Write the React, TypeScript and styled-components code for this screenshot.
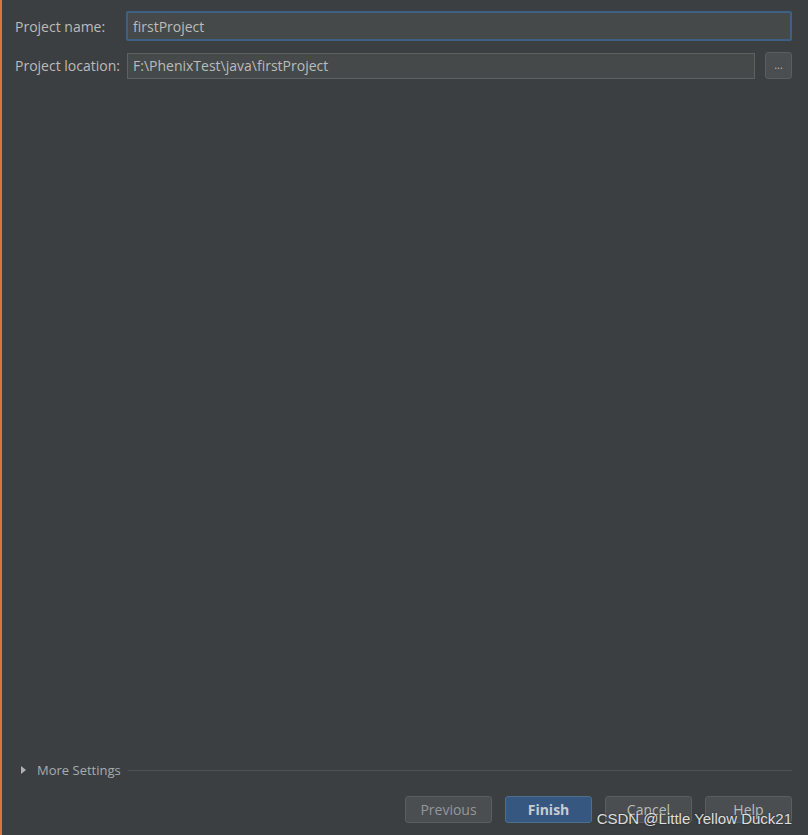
import React from "react";
import styled, { createGlobalStyle } from "styled-components";

const GlobalStyle = createGlobalStyle`
  html, body {
    margin: 0;
    padding: 0;
    background: #3c3f41;
  }
  #root {
    height: 835px;
  }
`;

const Dialog = styled.div`
  position: relative;
  box-sizing: border-box;
  height: 835px;
  display: flex;
  flex-direction: column;
  background: #3c3f41;
  border-left: 2px solid #d9773a;
  padding: 11px 16px 12px 13px;
  font-family: "Open Sans", "Noto Sans", sans-serif;
  font-size: 14px;
  color: #bbbbbb;
`;

const Form = styled.div`
  display: grid;
  grid-template-columns: 112px 1fr auto;
  row-gap: 11px;
  align-items: center;
`;

const Label = styled.label`
  color: #bbbbbb;
  white-space: nowrap;
`;

const Field = styled.div<{ $focused?: boolean; $span?: boolean }>`
  box-sizing: border-box;
  grid-column: ${(p) => (p.$span ? "2 / 4" : "auto")};
  height: ${(p) => (p.$focused ? "30px" : "26px")};
  margin-left: ${(p) => (p.$focused ? "-1px" : "0")};
  display: flex;
  align-items: center;
  padding-left: ${(p) => (p.$focused ? "5px" : "5px")};
  background: #45494a;
  border: ${(p) => (p.$focused ? "2px solid #3d6185" : "1px solid #5e6162")};
  border-radius: ${(p) => (p.$focused ? "2px" : "0")};
  color: #bbbbbb;
`;

const BrowseButton = styled.div`
  box-sizing: border-box;
  width: 27px;
  height: 27px;
  margin-left: 10px;
  display: flex;
  align-items: center;
  justify-content: center;
  background: #4a4e50;
  border: 1px solid #5b5e60;
  border-radius: 3px;
  color: #bbbbbb;
  font-size: 11px;
  padding-bottom: 2px;
`;

const Spacer = styled.div`
  flex: 1;
`;

const MoreRow = styled.div`
  display: flex;
  align-items: center;
  gap: 10px;
  padding-left: 6px;
  margin-bottom: 17px;
`;

const Triangle = styled.span`
  width: 0;
  height: 0;
  border-top: 4px solid transparent;
  border-bottom: 4px solid transparent;
  border-left: 5px solid #afb1b3;
`;

const MoreLabel = styled.span`
  color: #a8acaf;
  font-size: 13px;
  margin-left: 1px;
`;

const Divider = styled.div`
  flex: 1;
  height: 1px;
  background: #4f5254;
  margin-left: -3px;
`;

const ButtonBar = styled.div`
  display: flex;
  justify-content: flex-end;
  gap: 13px;
`;

const Button = styled.div<{ $primary?: boolean; $disabled?: boolean }>`
  box-sizing: border-box;
  width: 87px;
  height: 27px;
  display: flex;
  align-items: center;
  justify-content: center;
  border-radius: 3px;
  background: ${(p) => (p.$primary ? "#365880" : "#4a4e50")};
  border: 1px solid ${(p) => (p.$primary ? "#4c708c" : "#5b5e60")};
  color: ${(p) => (p.$primary ? "#c8ccd0" : p.$disabled ? "#94979a" : "#bbbbbb")};
  font-weight: ${(p) => (p.$primary ? 700 : 400)};
`;

const Watermark = styled.div`
  position: absolute;
  right: 16px;
  bottom: 8px;
  font-family: "Liberation Sans", Arial, sans-serif;
  font-size: 15px;
  color: rgba(255, 255, 255, 0.85);
  text-shadow: 0 0 2px rgba(0, 0, 0, 0.6);
  pointer-events: none;
`;

export default function App() {
  return (
    <>
      <GlobalStyle />
      <Dialog>
        <Form>
          <Label>Project name:</Label>
          <Field $focused $span>
            firstProject
          </Field>
          <Label>Project location:</Label>
          <Field>F:\PhenixTest\java\firstProject</Field>
          <BrowseButton>...</BrowseButton>
        </Form>
        <Spacer />
        <MoreRow>
          <Triangle />
          <MoreLabel>More Settings</MoreLabel>
          <Divider />
        </MoreRow>
        <ButtonBar>
          <Button $disabled>Previous</Button>
          <Button $primary>Finish</Button>
          <Button>Cancel</Button>
          <Button>Help</Button>
        </ButtonBar>
        <Watermark>CSDN @Little Yellow Duck21</Watermark>
      </Dialog>
    </>
  );
}
